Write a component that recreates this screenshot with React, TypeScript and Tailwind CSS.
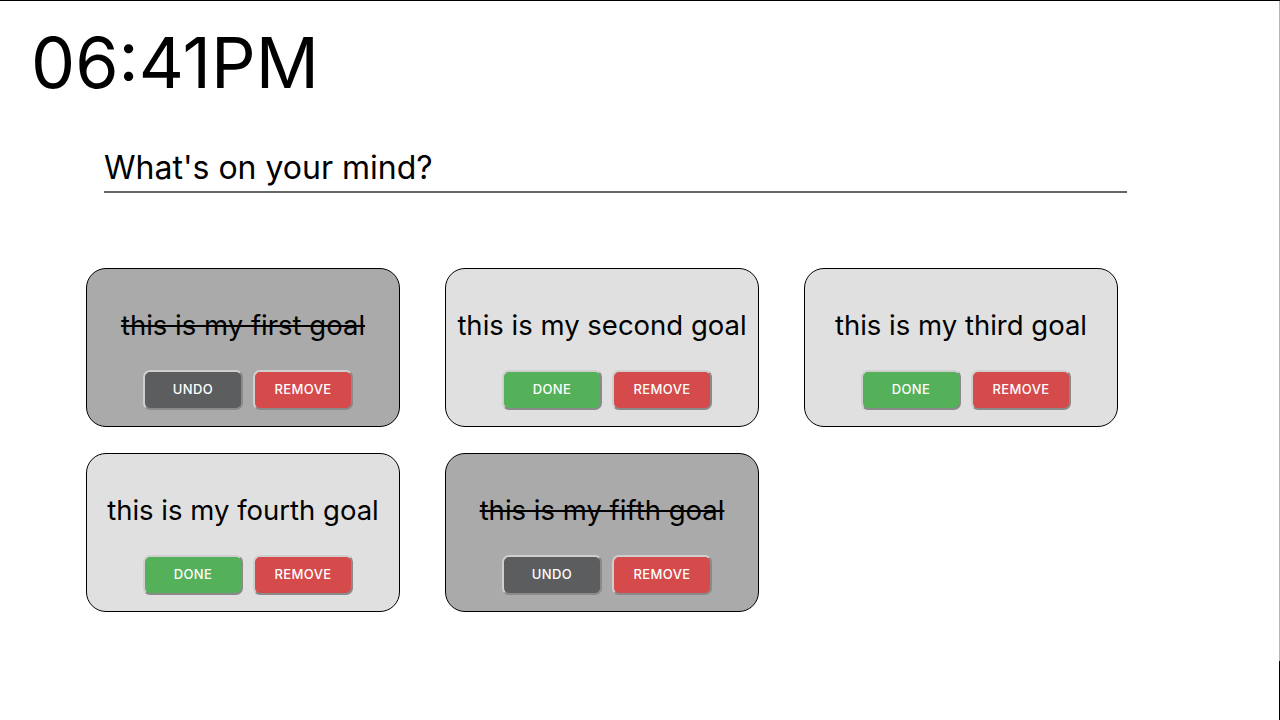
import React from "react";

type Goal = { text: string; done: boolean };

const goals: Goal[] = [
  { text: "this is my first goal", done: true },
  { text: "this is my second goal", done: false },
  { text: "this is my third goal", done: false },
  { text: "this is my fourth goal", done: false },
  { text: "this is my fifth goal", done: true },
];

function Btn({ label, color }: { label: string; color: string }) {
  return (
    <button
      className={`ml-[10px] h-[40px] w-[100px] rounded-[7px] border-2 border-t-[#cfcfcf] border-l-[#cfcfcf] border-b-[#8a8a8a] border-r-[#8a8a8a] text-[13px] font-medium uppercase tracking-[0.4px] text-white ${color}`}
    >
      {label}
    </button>
  );
}

function Card({ goal }: { goal: Goal }) {
  return (
    <div
      className={`flex h-[159px] w-[314px] flex-col items-center rounded-[20px] border border-black pt-[38px] ${
        goal.done ? "bg-[#aaaaaa]" : "bg-[#e0e0e0]"
      }`}
    >
      <div className={`text-[27.5px] leading-[36px] text-black ${goal.done ? "line-through" : ""}`}>
        {goal.text}
      </div>
      <div className="mt-[27px] flex">
        {goal.done ? (
          <Btn label="Undo" color="bg-[#5c5d5f]" />
        ) : (
          <Btn label="Done" color="bg-[#55b05a]" />
        )}
        <Btn label="Remove" color="bg-[#d54a4a]" />
      </div>
    </div>
  );
}

export default function App() {
  return (
    <div
      className="flex h-[720px] w-[1280px] flex-col border-t border-black bg-white text-black"
      style={{ fontFamily: "Inter, 'Noto Sans', sans-serif" }}
    >
      <div className="h-[660px] border-r border-r-[#b5b5b5]">
        <div className="pl-[31px] pt-[18px] text-[70px] leading-[88px]">06:41PM</div>
        <div className="ml-[104px] mt-[43px] w-[1023px] border-b-2 border-[#666666] pb-[5px]">
          <div className="text-[32px] leading-[36px]">What's on your mind?</div>
        </div>
        <div className="ml-[86px] mt-[75px] grid grid-cols-[314px_314px_314px] gap-x-[45px] gap-y-[26px]">
          {goals.map((g, i) => (
            <Card key={i} goal={g} />
          ))}
        </div>
      </div>
      <div className="flex-1 border-r border-r-black" />
    </div>
  );
}
